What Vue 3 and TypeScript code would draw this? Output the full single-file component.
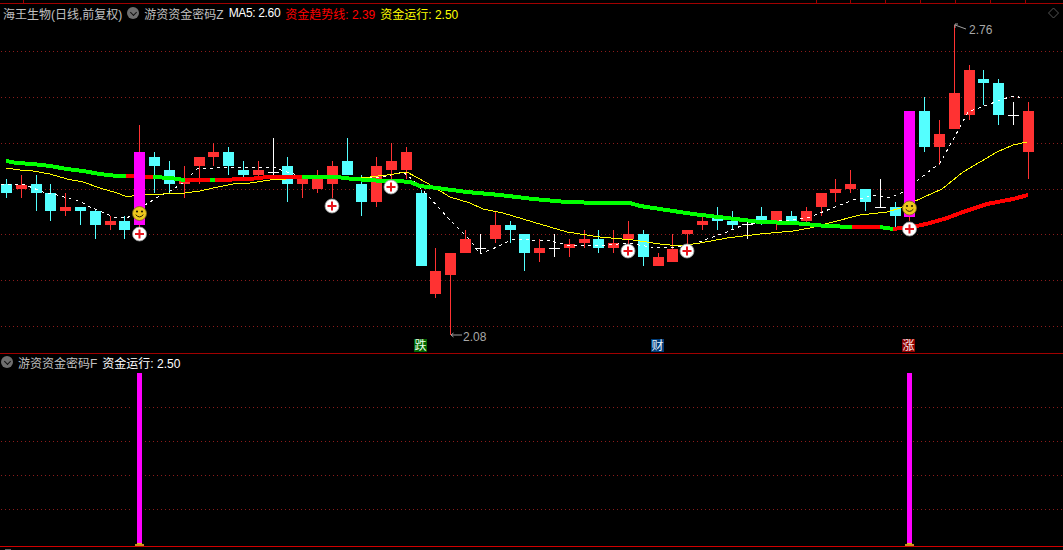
<script setup lang="ts">
type C = [number, number, number, number, string];
// high, bodyTop, bodyBottom, low, kind (r red, c cyan, w doji, p magenta signal)
const raw: C[] = [
  [179,184,193,198,'c'],[175,185,189,198,'r'],[175,184,193,211,'c'],[184,193,211,221,'c'],[193,207,211,216,'r'],
  [207,207,211,225,'c'],[210,211,225,239,'c'],[216,221,225,230,'r'],[216,221,230,239,'c'],[125,152,225,228,'p'],
  [152,157,166,193,'c'],[161,170,184,193,'c'],[166,181,184,198,'r'],[157,157,166,184,'r'],[143,152,157,166,'r'],
  [147,152,166,175,'c'],[161,170,175,180,'c'],[161,170,175,180,'r'],[138,172,172,176,'w'],[157,166,184,202,'c'],
  [175,175,184,198,'r'],[170,179,189,193,'r'],[161,166,184,198,'r'],[138,161,175,175,'c'],[175,184,202,216,'c'],
  [157,166,202,207,'r'],[143,161,170,179,'r'],[147,152,170,179,'r'],[190,193,266,266,'c'],[248,271,294,298,'r'],
  [253,253,275,335,'r'],[230,239,253,253,'r'],[234,248,248,254,'w'],[212,225,239,243,'r'],[221,225,230,243,'c'],
  [234,234,253,271,'c'],[239,248,253,262,'r'],[234,248,248,257,'w'],[239,244,248,257,'r'],[230,239,243,248,'r'],
  [230,239,248,253,'c'],[230,243,248,253,'r'],[221,234,239,245,'r'],[230,234,257,266,'c'],[253,257,266,266,'r'],
  [234,249,262,262,'r'],[230,230,234,244,'r'],[216,221,225,230,'r'],[207,217,221,230,'c'],[211,221,225,229,'c'],
  [222,224,224,239,'w'],[207,216,221,225,'c'],[211,211,221,230,'r'],[211,216,221,221,'c'],[207,211,221,225,'r'],
  [193,193,207,216,'r'],[179,189,193,202,'r'],[170,184,189,193,'r'],[189,189,202,211,'c'],[179,207,207,207,'w'],
  [202,207,216,231,'c'],[111,111,217,221,'p'],[97,111,147,152,'c'],[120,134,147,165,'r'],[25,93,129,129,'r'],
  [65,70,115,120,'r'],[70,79,83,105,'c'],[79,83,115,125,'c'],[102,115,115,125,'w'],[102,111,152,179,'r'],
];
const candles = raw.map(([hi, top, bot, lo, k], i) => {
  const x = Math.floor(6.5 + 14.81 * i);
  const color = k === 'c' ? '#54ffff' : k === 'w' ? '#ffffff' : '#ff3232';
  return { key: i, x, hi, top, bot, lo, k, color };
});
const plain = candles.filter((c) => c.k !== 'p');
const signal = candles.filter((c) => c.k === 'p');
const pts = (a: number[][]) => a.map((p) => p.join(',')).join(' ');
const trendGreen = [
  [[6,161],[17,163],[33,164],[50,166],[67,169],[83,171],[100,174],[117,176],[126,176]],
  [[153,177],[170,178],[185,180]],
  [[210,180],[215,180]],
  [[302,177],[337,177],[353,179],[383,181],[397,181],[410,182],[420,186],[437,188],[467,192],[500,195],[533,199],[567,202],[600,203],[630,203],[640,206],[660,209],[693,214],[727,218],[760,222],[793,223],[827,226],[852,227]],
  [[880,227],[893,229]],
].map(pts);
const trendRed = [
  [[126,176],[147,177],[153,177]],
  [[185,180],[210,180]],
  [[215,180],[250,179],[267,177],[302,177]],
  [[852,227],[880,227]],
  [[893,229],[917,226],[930,223],[947,218],[963,212],[987,204],[1013,199],[1028,195]],
].map(pts);
const yellow = pts([[6,168],[20,170],[33,171],[50,174],[67,179],[83,182],[100,188],[117,193],[125,196],[132,196],[145,195],[163,194],[185,193],[200,191],[213,188],[233,184],[250,183],[270,180],[303,178],[337,177],[370,177],[387,175],[407,172],[427,183],[450,197],[470,203],[483,209],[503,213],[533,222],[567,232],[600,237],[633,240],[660,244],[680,246],[700,243],[727,238],[760,234],[793,231],[810,228],[833,222],[860,215],[887,212],[900,208],[913,202],[942,189],[963,172],[980,162],[997,152],[1013,145],[1027,142]]);
const white = pts([[1,184],[10,184],[23,184],[33,188],[43,192],[57,195],[67,198],[80,201],[90,207],[100,211],[113,217],[127,218],[145,205],[158,197],[170,191],[183,183],[197,169],[217,168],[240,167],[273,167],[287,172],[297,175],[340,177],[383,177],[403,172],[413,180],[430,198],[450,220],[470,240],[480,254],[497,247],[513,239],[550,241],[567,245],[600,246],[627,243],[657,248],[677,247],[693,244],[710,238],[727,232],[743,225],[770,221],[793,220],[810,217],[830,209],[853,200],[877,195],[890,198],[903,192],[918,180],[940,163],[953,140],[968,112],[987,105],[1012,96],[1025,98]]);
const gridTop = [51.5, 97.5, 143.5, 189.5, 234.5, 280.5, 326.5];
const plusMarks = [[139.5,234],[332,206],[391,187],[628,251],[687,251],[909.5,229]];
const smiles = [[139.5,213.5],[909.5,208]];
const ticks = [23, 816, 850, 885, 920, 955, 990, 1025];
const gridBottom = [54.5, 88.5, 122.5, 156.5];
const bars = [
  { x: 137, clear: 133, w: 12 },
  { x: 907, clear: 905, w: 8 },
];
</script>

<template>
  <div class="screen">
    <section class="upper">
      <header class="legend">
        <span class="title">海王生物(日线,前复权)</span>
        <span class="toggle"></span>
        <span class="title">游资资金密码Z</span>
        <span class="white narrow">MA5: 2.60</span>
        <span class="red">资金趋势线: 2.39</span>
        <span class="yellow">资金运行: 2.50</span>
      </header>
      <svg class="plot" viewBox="0 0 1063 353" width="1063" height="353">
        <line x1="0" x2="1063" y1="3.5" y2="3.5" stroke="#a00000" />
        <line v-for="t in ticks" :key="t" :x1="t + 0.5" :x2="t + 0.5" y1="0" y2="3" stroke="#a00000" />
        <line v-for="g in gridTop" :key="g" x1="1" x2="1063" :y1="g" :y2="g" stroke="#8c1c1c" stroke-dasharray="1 3" />

        <g v-for="c in plain" :key="c.key" shape-rendering="crispEdges">
          <line :x1="c.x + 0.5" :x2="c.x + 0.5" :y1="c.hi" :y2="c.lo" :stroke="c.color" />
          <line v-if="c.k === 'w'" :x1="c.x - 5" :x2="c.x + 6" :y1="c.top + 0.5" :y2="c.top + 0.5" stroke="#ffffff" />
          <rect v-else :x="c.x - 5" :y="c.top" width="11" :height="c.bot - c.top" :fill="c.color" />
        </g>

        <g shape-rendering="crispEdges">
          <polyline :points="white" class="line" stroke="#ffffff" stroke-width="1" stroke-dasharray="3 4" />
          <polyline :points="yellow" class="line" stroke="#ffff00" stroke-width="1" />
          <polyline v-for="p in trendGreen" :key="p" :points="p" class="line" stroke="#00ff00" stroke-width="4" />
          <polyline v-for="p in trendRed" :key="p" :points="p" class="line" stroke="#ff0000" stroke-width="4" />
        </g>

        <g v-for="c in signal" :key="c.key" shape-rendering="crispEdges">
          <line :x1="c.x + 0.5" :x2="c.x + 0.5" :y1="c.hi" :y2="c.lo" stroke="#ff3232" />
          <rect :x="c.x - 5" :y="c.top" width="11" :height="c.bot - c.top" fill="#ff00ff" />
        </g>

        <g v-for="m in smiles" :key="m[0]" :transform="`translate(${m[0]} ${m[1]})`">
          <circle r="7" fill="#eec81e" stroke="#7a6a18" stroke-width="0.8" />
          <circle cx="-2.5" cy="-2" r="1.1" fill="#241c00" />
          <circle cx="2.5" cy="-2" r="1.1" fill="#241c00" />
          <path d="M-3.8 1.2 Q0 5.6 3.8 1.2" fill="none" stroke="#241c00" stroke-width="1" />
        </g>
        <g v-for="m in plusMarks" :key="m[0]" :transform="`translate(${m[0]} ${m[1]})`">
          <circle r="7" fill="#ffffff" stroke="#9a9a9a" stroke-width="0.8" />
          <path d="M-4.5 -1 H-1 V-4.5 H1 V-1 H4.5 V1 H1 V4.5 H-1 V1 H-4.5 Z" fill="#e8141c" />
        </g>

        <path d="M1048.5 13 L1053.5 8 L1058.5 13 L1053.5 18 Z" fill="none" stroke="#555555" />

        <path d="M451 335 H462 M451 335 l2.5 -2 M451 335 l2.5 2" fill="none" stroke="#a0a0a0" />
        <text x="463" y="341" class="note">2.08</text>
        <path d="M955 25 L966 29 M955 24 h3 M955 24 v4" fill="none" stroke="#a0a0a0" />
        <text x="969" y="34" class="note">2.76</text>

        <g class="tag">
          <rect x="414" y="339" width="13" height="13" fill="#006400" />
          <text x="420.5" y="350" fill="#e8ffe8">跌</text>
          <rect x="651" y="339" width="13" height="13" fill="#003c78" />
          <text x="657.5" y="350" fill="#e8f4ff">财</text>
          <rect x="902" y="339" width="13" height="13" fill="#8c0000" />
          <text x="908.5" y="350" fill="#ffe8e8">涨</text>
        </g>
      </svg>
    </section>

    <section class="lower">
      <header class="legend">
        <span class="toggle"></span>
        <span class="title">游资资金密码F</span>
        <span class="white">资金运行: 2.50</span>
      </header>
      <svg class="plot" viewBox="0 0 1063 197" width="1063" height="197">
        <line x1="0" x2="1063" y1="0.5" y2="0.5" stroke="#a00000" />
        <line v-for="g in gridBottom" :key="g" x1="1" x2="1063" :y1="g" :y2="g" stroke="#8c1c1c" stroke-dasharray="1 3" />
        <g v-for="b in bars" :key="b.x" shape-rendering="crispEdges">
          <rect :x="b.clear" y="20" :width="b.w" height="173" fill="#000" />
          <rect :x="b.x" y="20" width="5" height="173" fill="#ff00ff" />
          <rect :x="b.x" y="190" width="5" height="2" fill="#f0b020" />
          <rect :x="b.x - 2" y="191" width="9" height="2" fill="#c89020" />
        </g>
        <line x1="0" x2="1063" y1="193.5" y2="193.5" stroke="#d00000" />
        <rect x="5" y="196" width="6" height="1" fill="#666" />
      </svg>
    </section>
  </div>
</template>

<style scoped>
.screen {
  width: 1063px;
  height: 550px;
  background: #000;
  overflow: hidden;
  display: flex;
  flex-direction: column;
  font-family: "Liberation Sans", "Noto Sans CJK SC", sans-serif;
  font-size: 12px;
}
.upper,
.lower {
  position: relative;
}
.upper { height: 353px; }
.lower { height: 197px; }
.plot {
  display: block;
}
.legend {
  position: absolute;
  z-index: 1;
  left: 3px;
  top: 5px;
  height: 16px;
  display: flex;
  align-items: center;
  gap: 5px;
  white-space: nowrap;
}
.lower .legend {
  left: 1px;
  top: 1px;
}
.title { color: #c0c0c0; }
.white { color: #fff; }
.narrow { letter-spacing: -0.35px; }
.red { color: #ff0000; }
.yellow { color: #ffff00; }
.toggle {
  width: 12px;
  height: 12px;
  border-radius: 50%;
  background: #6e6e6e;
  position: relative;
  flex: none;
}
.toggle::after {
  content: "";
  position: absolute;
  left: 3.5px;
  top: 2.5px;
  width: 4px;
  height: 4px;
  border-right: 1.5px solid #111;
  border-bottom: 1.5px solid #111;
  transform: rotate(45deg);
}
.line {
  fill: none;
  stroke-linejoin: round;
}
.note {
  fill: #a8a8a8;
  font-size: 12px;
}
.tag text {
  font-size: 12px;
  text-anchor: middle;
}
</style>
